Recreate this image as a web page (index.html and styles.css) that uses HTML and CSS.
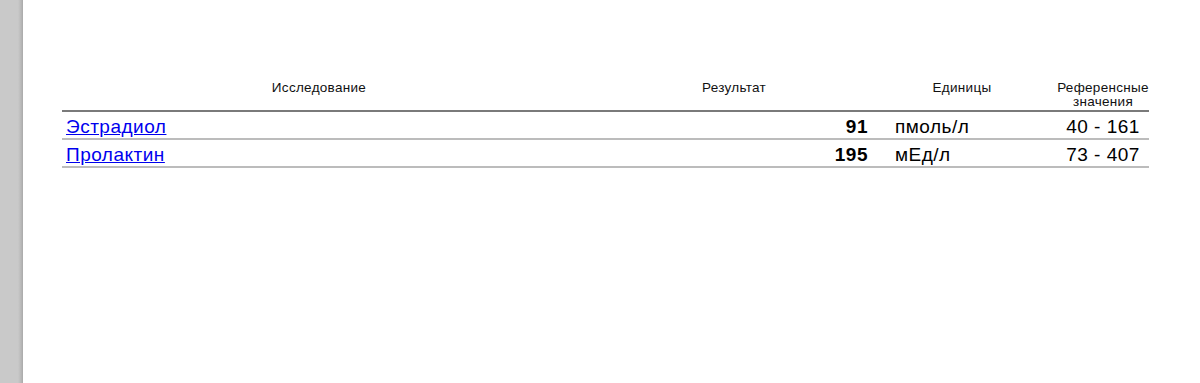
FILE: index.html
```html
<!DOCTYPE html>
<html lang="ru">
<head>
<meta charset="utf-8">
<title>Результаты</title>
<link rel="stylesheet" href="styles.css">
</head>
<body>
<div class="viewer">
  <div class="gutter"></div>
  <div class="page">
    <div class="results">
      <div class="cell head c1">Исследование</div>
      <div class="cell head c2">Результат</div>
      <div class="cell head c3">Единицы</div>
      <div class="cell head c4">Референсные<br>значения</div>

      <div class="cell row c1"><a href="#">Эстрадиол</a></div>
      <div class="cell row c2 val">91</div>
      <div class="cell row c3 unit">пмоль/л</div>
      <div class="cell row c4 ref">40 - 161</div>

      <div class="cell row c1"><a href="#">Пролактин</a></div>
      <div class="cell row c2 val">195</div>
      <div class="cell row c3 unit">мЕд/л</div>
      <div class="cell row c4 ref">73 - 407</div>
    </div>
  </div>
</div>
</body>
</html>
```

FILE: styles.css
```css
html, body {
  margin: 0;
  padding: 0;
  height: 100%;
  background: #ffffff;
  font-family: "Liberation Sans", Arial, sans-serif;
  color: #000;
}

.viewer {
  display: flex;
  height: 383px;
  overflow: hidden;
}

.gutter {
  width: 23px;
  flex: none;
  background: linear-gradient(to right, #c9c9c9 0, #c9c9c9 18px, #b9b9b9 21px, #a9a9a9 23px);
}

.page {
  flex: 1;
  background: #fff;
  padding: 81px 0 0 39px;
}

.results {
  display: grid;
  grid-template-columns: 514px 316px 165px 92px;
  width: 1087px;
}

.cell.head {
  font-size: 13.5px;
  line-height: 14px;
  letter-spacing: 0.3px;
  text-align: center;
  padding-bottom: 1px;
  border-bottom: 2px solid #7a7a7a;
  color: #111;
}

.head.c3 {
  padding-right: 25px;
}

.cell.row {
  font-size: 19px;
  line-height: 23px;
  letter-spacing: 0.5px;
  padding-top: 3px;
  border-bottom: 2px solid #bcbcbc;
  white-space: nowrap;
}

.row.c1 {
  padding-left: 4px;
}

.row.c1 a {
  color: #0000ee;
  text-decoration: underline;
}

.val {
  text-align: right;
  font-weight: bold;
  padding-right: 24px;
}

.unit {
  padding-left: 3px;
}

.ref {
  text-align: center;
}
```
